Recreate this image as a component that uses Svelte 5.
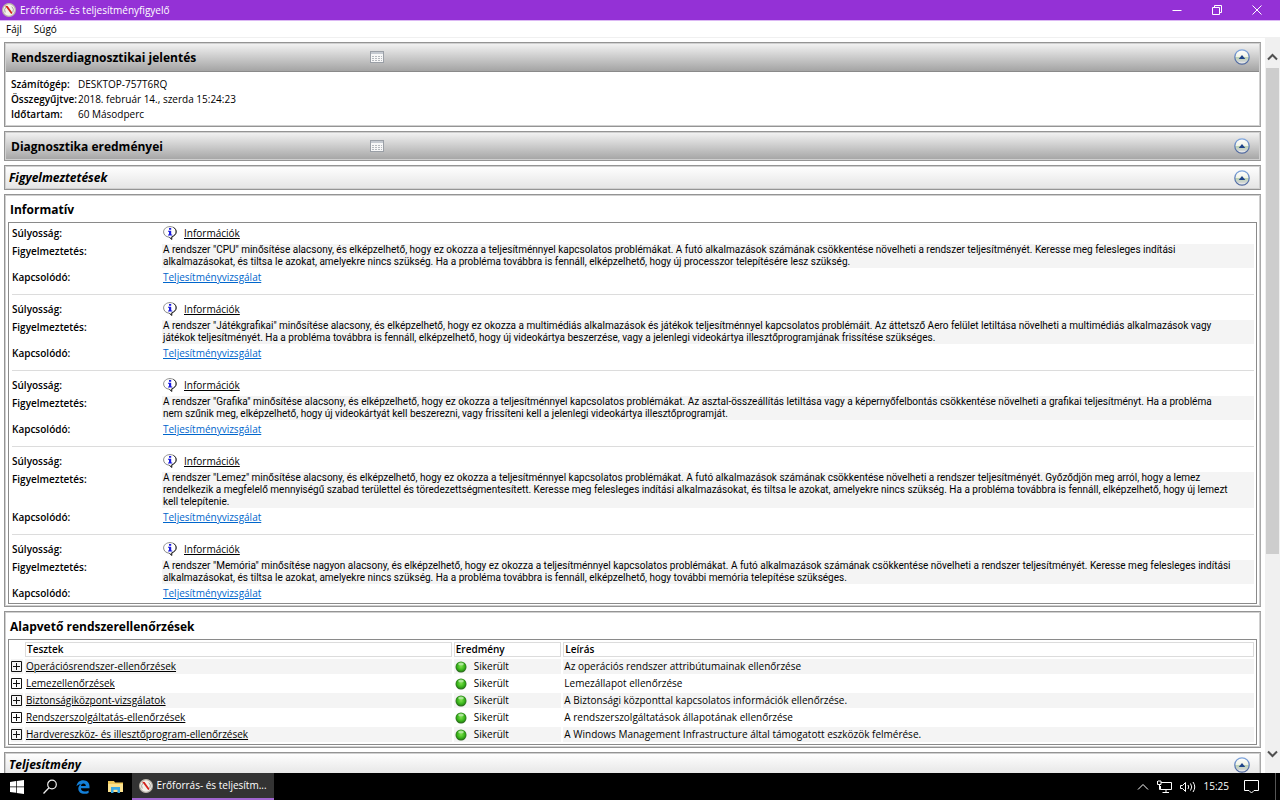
<script lang="ts">
	interface Warning {
		text: string;
	}

	const warnings: Warning[] = [
		{
			text: 'A rendszer "CPU" minősítése alacsony, és elképzelhető, hogy ez okozza a teljesítménnyel kapcsolatos problémákat. A futó alkalmazások számának csökkentése növelheti a rendszer teljesítményét. Keresse meg felesleges indítási\nalkalmazásokat, és tiltsa le azokat, amelyekre nincs szükség. Ha a probléma továbbra is fennáll, elképzelhető, hogy új processzor telepítésére lesz szükség.'
		},
		{
			text: 'A rendszer "Játékgrafikai" minősítése alacsony, és elképzelhető, hogy ez okozza a multimédiás alkalmazások és játékok teljesítménnyel kapcsolatos problémáit. Az áttetsző Aero felület letiltása növelheti a multimédiás alkalmazások vagy\njátékok teljesítményét. Ha a probléma továbbra is fennáll, elképzelhető, hogy új videokártya beszerzése, vagy a jelenlegi videokártya illesztőprogramjának frissítése szükséges.'
		},
		{
			text: 'A rendszer "Grafika" minősítése alacsony, és elképzelhető, hogy ez okozza a teljesítménnyel kapcsolatos problémákat. Az asztal-összeállítás letiltása vagy a képernyőfelbontás csökkentése növelheti a grafikai teljesítményt. Ha a probléma\nnem szűnik meg, elképzelhető, hogy új videokártyát kell beszerezni, vagy frissíteni kell a jelenlegi videokártya illesztőprogramját.'
		},
		{
			text: 'A rendszer "Lemez" minősítése alacsony, és elképzelhető, hogy ez okozza a teljesítménnyel kapcsolatos problémákat. A futó alkalmazások számának csökkentése növelheti a rendszer teljesítményét. Győződjön meg arról, hogy a lemez\nrendelkezik a megfelelő mennyiségű szabad területtel és töredezettségmentesített. Keresse meg felesleges indítási alkalmazásokat, és tiltsa le azokat, amelyekre nincs szükség. Ha a probléma továbbra is fennáll, elképzelhető, hogy új lemezt\nkell telepítenie.'
		},
		{
			text: 'A rendszer "Memória" minősítése nagyon alacsony, és elképzelhető, hogy ez okozza a teljesítménnyel kapcsolatos problémákat. A futó alkalmazások számának csökkentése növelheti a rendszer teljesítményét. Keresse meg felesleges indítási\nalkalmazásokat, és tiltsa le azokat, amelyekre nincs szükség. Ha a probléma továbbra is fennáll, elképzelhető, hogy további memória telepítése szükséges.'
		}
	];

	const checks = [
		{ name: 'Operációsrendszer-ellenőrzések', description: 'Az operációs rendszer attribútumainak ellenőrzése' },
		{ name: 'Lemezellenőrzések', description: 'Lemezállapot ellenőrzése' },
		{ name: 'Biztonságiközpont-vizsgálatok', description: 'A Biztonsági központtal kapcsolatos információk ellenőrzése.' },
		{ name: 'Rendszerszolgáltatás-ellenőrzések', description: 'A rendszerszolgáltatások állapotának ellenőrzése' },
		{ name: 'Hardvereszköz- és illesztőprogram-ellenőrzések', description: 'A Windows Management Infrastructure által támogatott eszközök felmérése.' }
	];
</script>

{#snippet gauge()}
	<svg class="gauge" viewBox="0 0 14 14" width="14" height="14" aria-hidden="true">
		<circle cx="7" cy="7" r="6.4" fill="#f4f1ea" stroke="#b9b3a8" stroke-width="1.2" />
		<path d="M3.2 9.5a4.6 4.6 0 0 1 1-5.6M9.8 3.6a4.6 4.6 0 0 1 1 5.6" fill="none" stroke="#8d8d86" stroke-width="0.8" />
		<path d="M3 2.800l2.600.2 5 7-1.400.9-5.200-6.800z" fill="#d3221c" />
	</svg>
{/snippet}

{#snippet collapse()}
	<button class="collapse" aria-label="Összecsukás">
		<svg viewBox="0 0 16 16" width="16" height="16">
			<defs>
				<linearGradient id="orb" x1="0" y1="0" x2="0" y2="1">
					<stop offset="0" stop-color="#ffffff" />
					<stop offset="0.5" stop-color="#f0f3e6" />
					<stop offset="0.52" stop-color="#bdd3b4" />
					<stop offset="0.8" stop-color="#cfd4d2" />
					<stop offset="1" stop-color="#ffffff" />
				</linearGradient>
				<linearGradient id="ring" x1="0" y1="0" x2="0" y2="1">
					<stop offset="0" stop-color="#7fa6de" />
					<stop offset="1" stop-color="#4a6299" />
				</linearGradient>
			</defs>
			<circle cx="8" cy="8" r="7.2" fill="url(#orb)" stroke="url(#ring)" stroke-width="1.3" />
			<path d="M4.700 10L8 6l3.300 4z" fill="#1f4489" />
		</svg>
	</button>
{/snippet}

{#snippet sheet()}
	<button class="sheet" aria-label="Menü">
		<svg viewBox="0 0 14 12" width="14" height="12">
			<rect x="0.5" y="0.5" width="13" height="11" fill="#f7f7f7" stroke="#9a9fa6" />
			<path d="M1 2h12" stroke="#c4c9d0" stroke-width="2" />
			<path d="M2 5.500h10M2 7.500h10M2 9.500h10" stroke="#b4b8bd" stroke-dasharray="2 1" />
		</svg>
	</button>
{/snippet}

<div class="window">
	<header class="titlebar">
		{@render gauge()}
		<span class="caption">Erőforrás- és teljesítményfigyelő</span>
		<div class="controls">
			<button aria-label="Kis méret">
				<svg viewBox="0 0 10 10" width="10" height="10"><path d="M0.500 5.500h9" /></svg>
			</button>
			<button aria-label="Előző méret">
				<svg viewBox="0 0 10 10" width="10" height="10">
					<path d="M0.500 2.500h7v7h-7zM2.500 2.500v-2h7v7h-2" />
				</svg>
			</button>
			<button aria-label="Bezárás">
				<svg viewBox="0 0 10 10" width="10" height="10"><path d="M0.500 0.500l9 9M9.500 0.500l-9 9" /></svg>
			</button>
		</div>
	</header>

	<nav class="menubar">
		<button>Fájl</button>
		<button>Súgó</button>
	</nav>

	<div class="view">
		<main class="report">
			<section class="panel">
				<div class="bar dark">
					<h1>Rendszerdiagnosztikai jelentés</h1>
					{@render sheet()}
					{@render collapse()}
				</div>
				<dl class="summary">
					<dt>Számítógép:</dt>
					<dd>DESKTOP-757T6RQ</dd>
					<dt>Összegyűjtve:</dt>
					<dd>2018. február 14., szerda 15:24:23</dd>
					<dt>Időtartam:</dt>
					<dd>60 Másodperc</dd>
				</dl>
			</section>

			<section class="panel">
				<div class="bar dark">
					<h1>Diagnosztika eredményei</h1>
					{@render sheet()}
					{@render collapse()}
				</div>
			</section>

			<section class="panel">
				<div class="bar">
					<h2>Figyelmeztetések</h2>
					{@render collapse()}
				</div>
			</section>

			<section class="panel boxed">
				<h3>Informatív</h3>
				<div class="frame warnings">
					{#each warnings as warning}
						<dl class="warning">
							<dt>Súlyosság:</dt>
							<dd class="severity">
								<svg viewBox="0 0 14 14" width="14" height="14" aria-hidden="true">
									<path
										d="M7 0.600c-3.600 0-6.400 2.300-6.400 5.300s2.500 5 5.600 5.300l2.300 2.400.2-2.700c2.800-.6 4.700-2.600 4.700-5C13.400 2.900 10.600.6 7 .6z"
										fill="#fff"
										stroke="#8a8a8a"
									/>
									<path d="M10.500 1.500c3.600 2.200 3.800 7-1.600 9.200l-.2 2.700-2-2.100" fill="none" stroke="#222" />
									<path d="M6 2h2.200v1.700H6zM5 4.700h3.200v3.800h1v1.100H5V8.500h1V5.700H5z" fill="#1a1ae0" />
								</svg>
								<a class="plain" href="#info">Információk</a>
							</dd>
							<dt>Figyelmeztetés:</dt>
							<dd class="message">{warning.text}</dd>
							<dt>Kapcsolódó:</dt>
							<dd><a href="#related">Teljesítményvizsgálat</a></dd>
						</dl>
					{/each}
				</div>
			</section>

			<section class="panel boxed">
				<h3>Alapvető rendszerellenőrzések</h3>
				<div class="frame">
					<table>
						<thead>
							<tr>
								<td class="toggle"></td>
								<th class="name">Tesztek</th>
								<th class="result">Eredmény</th>
								<th>Leírás</th>
							</tr>
						</thead>
						<tbody>
							{#each checks as check}
								<tr>
									<td class="toggle">
										<button aria-label="Kibontás">
											<svg viewBox="0 0 11 11" width="11" height="11">
												<path d="M0.500 0.500h10v10h-10zM5.500 2v7M2 5.500h7" fill="none" stroke="#111" />
											</svg>
										</button>
									</td>
									<td><a class="plain" href="#check">{check.name}</a></td>
									<td>
										<span class="status">
											<svg viewBox="0 0 12 12" width="12" height="12" aria-hidden="true">
												<defs>
													<radialGradient id="led" cx="0.5" cy="0.45" r="0.55">
														<stop offset="0" stop-color="#7be04a" />
														<stop offset="0.6" stop-color="#38b41a" />
														<stop offset="1" stop-color="#245c1a" />
													</radialGradient>
												</defs>
												<circle cx="6" cy="6" r="5.500" fill="url(#led)" />
												<ellipse cx="6" cy="3" rx="2.800" ry="1.500" fill="#d6f5c8" opacity="0.7" />
											</svg>
											Sikerült
										</span>
									</td>
									<td>{check.description}</td>
								</tr>
							{/each}
						</tbody>
					</table>
				</div>
			</section>

			<section class="panel">
				<div class="bar">
					<h2>Teljesítmény</h2>
					{@render collapse()}
				</div>
			</section>
		</main>

		<div class="scrollbar">
			<button aria-label="Fel">
				<svg viewBox="0 0 11 8" width="11" height="8"><path d="M1 6.500l4.500-4.500 4.500 4.500" /></svg>
			</button>
			<div class="track"><div class="thumb"></div></div>
			<button aria-label="Le">
				<svg viewBox="0 0 11 8" width="11" height="8"><path d="M1 1.500l4.500 4.500 4.500-4.500" /></svg>
			</button>
		</div>
	</div>

	<footer class="taskbar">
		<button class="pin" aria-label="Start">
			<svg viewBox="0 0 14 14" width="14" height="14">
				<path d="M0 2l6-.9v5.500H0zM6.700 1L14 0v6.600H6.700zM0 7.300h6v5.500L0 12zM6.700 7.300H14V14l-7.300-1z" fill="#fff" />
			</svg>
		</button>
		<button class="pin" aria-label="Keresés">
			<svg viewBox="0 0 16 16" width="16" height="16">
				<circle cx="10" cy="5.500" r="4.300" fill="none" stroke="#eee" stroke-width="1.200" />
				<path d="M7 8.800L1.500 14.500" stroke="#eee" stroke-width="1.300" />
			</svg>
		</button>
		<button class="pin" aria-label="Edge">
			<svg viewBox="0 0 14 14" width="14" height="14">
				<path
					d="M0.500 6.300C1 2.500 3.600.3 7.200.3c4 0 6.300 2.800 6.300 6.300v1.600H4.900c.1 2.200 1.900 3.200 4.100 3.200 1.400 0 2.600-.4 3.600-1v2.500c-1.100.6-2.500.9-4.200.9-3.700 0-6.100-2-6.100-5.300 0-2 1.100-3.700 2.900-4.600C3.300 4.100 1.500 4.800.5 6.300zM5 5.900h4.800c0-1.500-.8-2.500-2.300-2.500S5.100 4.500 5 5.900z"
					fill="#1380da"
					fill-rule="evenodd"
				/>
			</svg>
		</button>
		<button class="pin" aria-label="Fájlkezelő">
			<svg viewBox="0 0 15 13" width="15" height="13">
				<path d="M0 1h6l1 1.500h8V12H0z" fill="#f0c95c" />
				<path d="M0 4h15v8H0z" fill="#fbe28f" />
				<path d="M3 7h9v6H9.500V9.700h-4V13H3z" fill="#3aa9e6" />
			</svg>
		</button>
		<button class="task">
			{@render gauge()}
			<span>Erőforrás- és teljesítm...</span>
		</button>
		<div class="tray">
			<svg viewBox="0 0 12 8" width="12" height="8"><path d="M1 6.500l5-5 5 5" /></svg>
			<svg viewBox="0 0 15 13" width="15" height="13">
				<path d="M4 2.500h10.500v7H3.500V6M9 9.500v3M5.500 12.500h6.500M0.500 1v3.500h3.500V1M1 1h3M2.500 4.500v5h1" />
			</svg>
			<svg viewBox="0 0 16 12" width="16" height="12">
				<path d="M0.500 4.500h2l3-3v9l-3-3h-2zM8 4q1.500 2 0 4M10.500 2.500q2.500 3.500 0 7M13 1q3.500 5 0 10" />
			</svg>
			<time>15:25</time>
			<svg viewBox="0 0 15 14" width="15" height="14"><path d="M0.500 0.500h14v10h-4.500l-2.500 2.500-2.500-2.500H0.500z" /></svg>
			<span class="desktop"></span>
		</div>
	</footer>
</div>

<style>
	:global(body) {
		margin: 0;
	}

	.window {
		height: 100vh;
		display: grid;
		grid-template-rows: 21px 17px minmax(0, 1fr) 27px;
		background: #fff;
		color: #000;
		font-family: "Open Sans", "Noto Sans", sans-serif;
		font-size: 10px;
		line-height: 15px;
	}

	button {
		display: flex;
		align-items: center;
		justify-content: center;
		padding: 0;
		border: 0;
		background: none;
		color: inherit;
		font: inherit;
	}

	svg {
		display: block;
		flex: none;
	}

	.titlebar {
		display: flex;
		align-items: center;
		gap: 4px;
		padding: 0 3px 0 2px;
		border-bottom: 1px solid #dcb8f4;
		background: #9431d6;
		color: #fff;
	}

	.controls {
		display: flex;
		align-self: stretch;
		margin-left: auto;
	}

	.controls button {
		width: 40px;
	}

	.controls path {
		fill: none;
		stroke: #fff;
	}

	.menubar {
		display: flex;
		gap: 12px;
		padding-left: 6px;
		border-bottom: 1px solid #f0f0f0;
	}

	.view {
		display: flex;
		min-height: 0;
	}

	.report {
		flex: 1;
		min-width: 0;
		display: flex;
		flex-direction: column;
		gap: 4px;
		padding: 4px 4px 0;
		overflow: hidden;
	}

	.panel {
		flex: none;
		border: 1px solid #949494;
		border-right-color: #a8a8a8;
		outline: 1px solid #d0d0d0;
		outline-offset: -2px;
	}

	.boxed {
		padding: 0 3px 2px;
	}

	.bar {
		display: flex;
		align-items: center;
		height: 23px;
		padding: 0 10px 0 4px;
		background: linear-gradient(#fff, #e4e4e4);
	}

	.bar.dark {
		height: 28px;
		padding-left: 6px;
		background: linear-gradient(#f4f4f4, #a4a4a4);
	}

	h1,
	h2,
	h3 {
		margin: 0;
		font-size: 12px;
		line-height: 25px;
	}

	h1 {
		width: 29%;
	}

	h2 {
		font-style: italic;
	}

	h3 {
		padding: 2px 2px 0;
	}

	.collapse {
		margin-left: auto;
	}

	.summary {
		display: grid;
		grid-template-columns: 67px 1fr;
		margin: 0;
		padding: 5px 6px 4px;
		border-top: 1px solid #8a8a8a;
	}

	dt {
		font-weight: 600;
	}

	dd {
		margin: 0;
	}

	.frame {
		border: 1px solid #8a8a8a;
	}

	.warnings {
		padding: 3px 2px 1px 3px;
	}

	.warning {
		display: grid;
		grid-template-columns: 150px 1fr;
		grid-template-rows: 16px auto 16px;
		row-gap: 2px;
		margin: 0 0 7px;
		padding-bottom: 8px;
		border-bottom: 1px solid #dcdcdc;
	}

	.warning:last-child {
		margin: 0;
		padding: 0;
		border: 0;
	}

	.warning dd {
		padding-left: 1px;
	}

	.severity {
		display: flex;
		align-items: flex-start;
		gap: 7px;
	}

	.message {
		background: #f4f4f4;
		font-family: Roboto, sans-serif;
		line-height: 12px;
		white-space: pre-line;
	}

	a {
		color: #0066cc;
	}

	a.plain {
		color: #000;
	}

	table {
		width: 100%;
		border-spacing: 2px;
	}

	th,
	td {
		height: 15px;
		padding: 0 1px;
		box-sizing: border-box;
		text-align: left;
		line-height: 13px;
	}

	th {
		border: 1px solid #dcdcdc;
		font-weight: 600;
	}

	tbody tr:nth-child(odd) td {
		background: #f4f4f4;
	}

	.toggle {
		width: 12px;
		padding: 0;
	}

	.name {
		width: 34.5%;
	}

	.result {
		width: 8.7%;
	}

	.status {
		display: flex;
		align-items: center;
		gap: 7px;
	}

	.scrollbar {
		width: 15px;
		display: flex;
		flex-direction: column;
		background: #f0f0f0;
	}

	.scrollbar button {
		height: 30px;
		padding-top: 8px;
	}

	.scrollbar button:last-child {
		padding: 0 0 8px;
	}

	.scrollbar path {
		fill: none;
		stroke: #505050;
		stroke-width: 2;
	}

	.track {
		flex: 1;
	}

	.thumb {
		height: 72%;
		margin: 0 1px;
		background: #cdcdcd;
	}

	.taskbar {
		display: flex;
		background: #000;
		color: #fff;
	}

	.pin {
		width: 33px;
	}

	.task {
		gap: 3px;
		width: 142px;
		background: #333;
		border-bottom: 2px solid #a065cf;
	}

	.tray {
		display: flex;
		align-items: center;
		gap: 8px;
		margin-left: auto;
	}

	.tray path {
		fill: none;
		stroke: #fff;
	}

	.tray time {
		margin-right: 7px;
	}

	.desktop {
		align-self: stretch;
		width: 4px;
		margin-left: 8px;
		border-left: 1px solid #555;
	}
</style>
